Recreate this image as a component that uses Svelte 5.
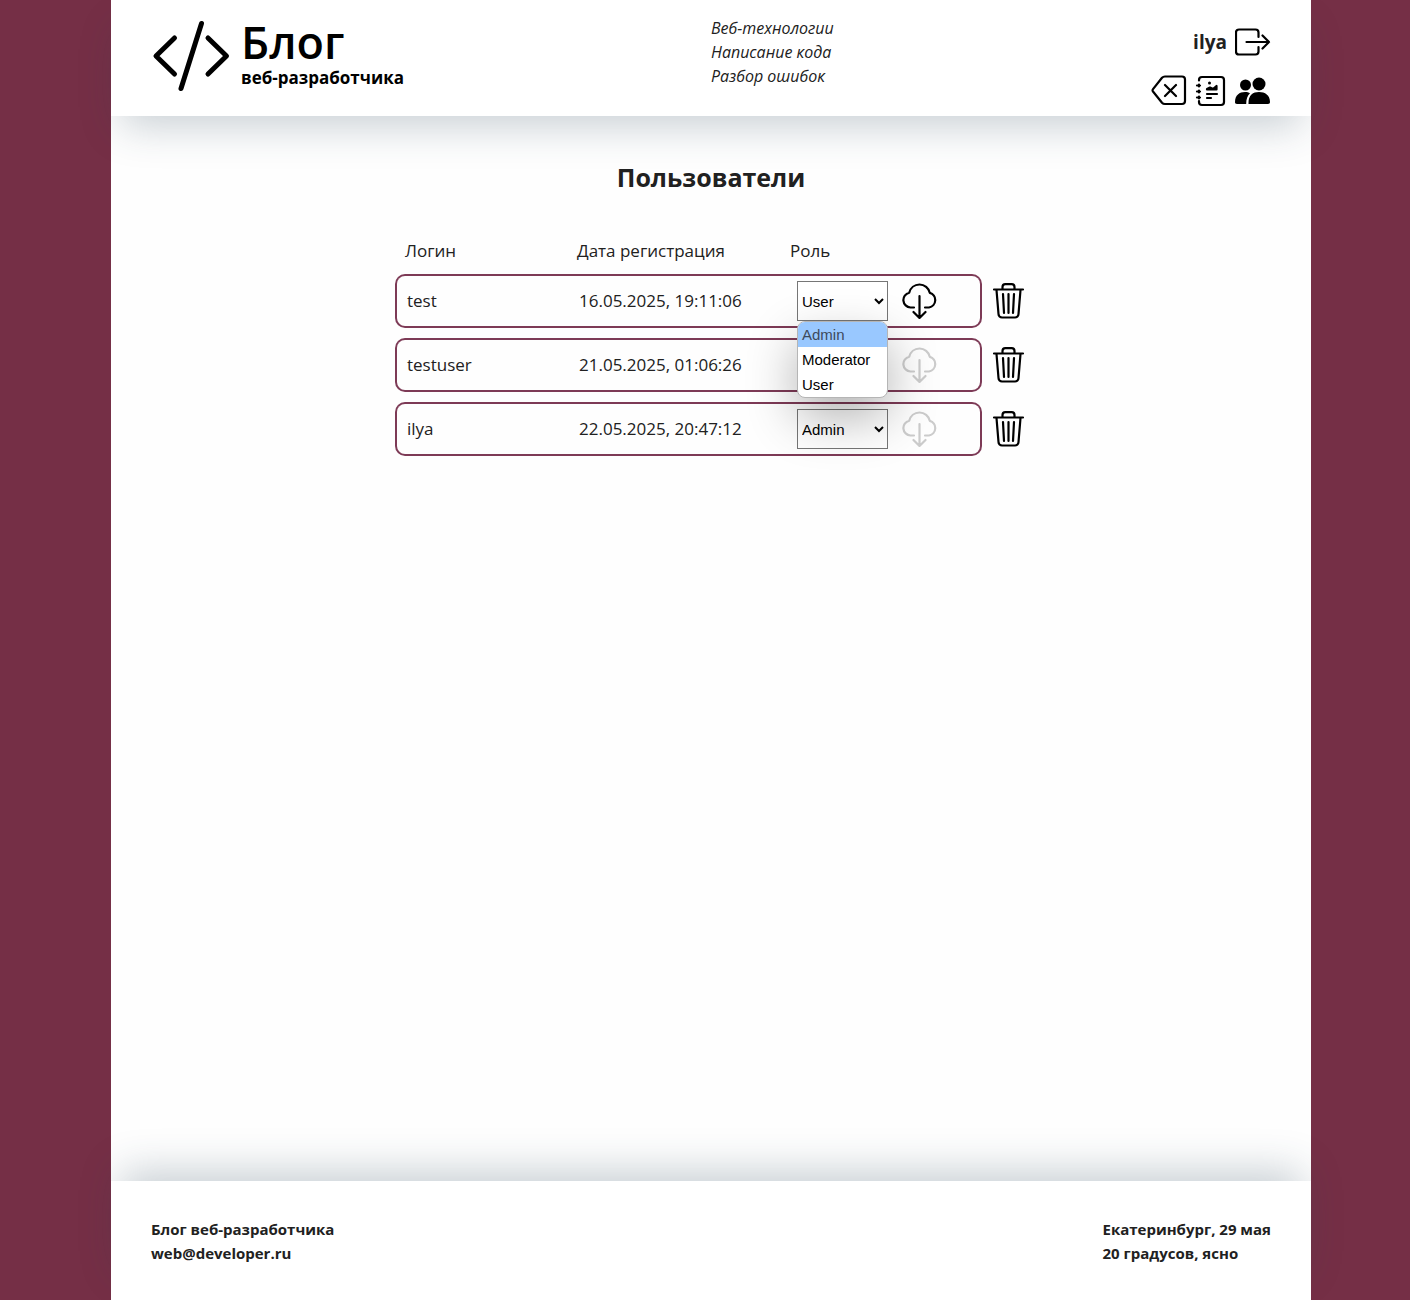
<script>
  const topics = ['Веб-технологии', 'Написание кода', 'Разбор ошибок'];
  const roles = ['Admin', 'Moderator', 'User'];

  let users = $state([
    { login: 'test', date: '16.05.2025, 19:11:06', role: 'User', changed: true, open: true },
    { login: 'testuser', date: '21.05.2025, 01:06:26', role: 'User', changed: false, open: false },
    { login: 'ilya', date: '22.05.2025, 20:47:12', role: 'Admin', changed: false, open: false }
  ]);

  function pick(user, role) {
    user.role = role;
    user.open = false;
    user.changed = true;
  }
</script>

<div class="page">
  <header>
    <a class="brand" href="#home">
      <svg class="code" viewBox="0 0 80 80" aria-hidden="true">
        <path d="M23.500 22 5 40 23.500 58M57 22 75.500 40 57 58M50.500 7.500 30 72.500" />
      </svg>
      <span class="brand-text">
        <span class="brand-title">Блог</span>
        <span class="brand-sub">веб-разработчика</span>
      </span>
    </a>
    <div class="side">
      <ul class="topics">
        {#each topics as topic}
          <li>{topic}</li>
        {/each}
      </ul>
      <div class="account">
        <div class="who">
          <span class="name">ilya</span>
          <button aria-label="Выйти">
            <svg class="icon line" viewBox="0 0 36 36">
              <path d="M23.500 13V8.500a3 3 0 0 0-3-3H4a3 3 0 0 0-3 3v19a3 3 0 0 0 3 3h16.500a3 3 0 0 0 3-3V23M11.500 18H34M27.500 11.500l6.500 6.500-6.500 6.500" />
            </svg>
          </button>
        </div>
        <nav>
          <a href="#back" aria-label="Назад">
            <svg class="icon line" viewBox="0 0 36 36">
              <path d="M14 4.500h17a3 3 0 0 1 3 3v21.500a3 3 0 0 1-3 3H14a4 4 0 0 1-3-1.300L2 19.500a2 2 0 0 1 0-2.400L11 5.800a4 4 0 0 1 3-1.300ZM14 13l11 11M25 13l-11 11" />
            </svg>
          </a>
          <a href="#post" aria-label="Новая статья">
            <svg class="icon line" viewBox="0 0 36 36">
              <path d="M6 8.500V8a3 3 0 0 1 3-3h19a3 3 0 0 1 3 3v22a3 3 0 0 1-3 3H9a3 3 0 0 1-3-3v-1M6 12.500v2M6 18.500v2M6 24.500v2M4 13.500h3M4 19.500h3M4 25.500h3M14 22h10M14 26h4" />
              <path class="solid" d="M14 17.500V17l3-1.500 3 1.500 3.500-3v3.500Z" />
              <circle class="solid dot" cx="16.500" cy="11" r="1.500" />
            </svg>
          </a>
          <a href="#users" aria-label="Пользователи">
            <svg class="icon fill" viewBox="0 0 36 36">
              <circle cx="10.500" cy="13" r="5.500" />
              <circle cx="24" cy="12" r="6.500" />
              <path d="M13.500 32v-1c0-8 4.500-11 10.500-11s11 3 11 10c0 1.300-.7 2-2 2ZM0 30.300C0 23 4.500 20 10 20c2 0 3.700.4 5 1.200-2.600 2.300-3.800 5.800-3.800 10.800H2c-1.300 0-2-.5-2-1.700Z" />
            </svg>
          </a>
        </nav>
      </div>
    </div>
  </header>

  <main>
    <h1>Пользователи</h1>
    <table>
      <colgroup>
        <col class="c-login" /><col class="c-date" /><col class="c-role" /><col class="c-del" />
      </colgroup>
      <thead>
        <tr>
          <th scope="col">Логин</th>
          <th scope="col">Дата регистрация</th>
          <th scope="col">Роль</th>
          <td></td>
        </tr>
      </thead>
      <tbody>
        {#each users as user}
          <tr>
            <td class="login">{user.login}</td>
            <td class="date">{user.date}</td>
            <td class="role">
              <div class="role-box">
                <div class="picker">
                  <select aria-label="Роль {user.login}" bind:value={user.role} onchange={() => (user.changed = true)}>
                    {#each roles as role}
                      <option>{role}</option>
                    {/each}
                  </select>
                  {#if user.open}
                    <div class="menu" role="listbox" aria-label="Роли">
                      {#each roles as role, i}
                        <button role="option" aria-selected={i === 0} class:active={i === 0} onclick={() => pick(user, role)}>{role}</button>
                      {/each}
                    </div>
                  {/if}
                </div>
                <button class="save" aria-label="Сохранить роль" disabled={!user.changed}>
                  <svg class="icon line" viewBox="0 0 36 36">
                    <path d="M13 24.500H9.500a7.500 7.500 0 0 1-1.300-14.800C9.500 4.800 13.500 1.500 18.500 1.500s9.300 3.500 10.300 8.400A7.500 7.500 0 0 1 28 24.500h-4M18.500 13v21.500M12.500 29l6 6 6-6" />
                  </svg>
                </button>
              </div>
            </td>
            <td class="del">
              <button aria-label="Удалить {user.login}">
                <svg class="icon line" viewBox="0 0 36 36">
                  <path d="M4 6.500h29M12.500 6V4a2.800 2.800 0 0 1 2.800-2.800h6.400A2.800 2.800 0 0 1 24.500 4v2M6.500 7l2 24A3.500 3.500 0 0 0 12 34.500h13a3.500 3.500 0 0 0 3.500-3.500L30.500 7M13 11l1 19M18.500 11v19M24 11l-1 19" />
                </svg>
              </button>
            </td>
          </tr>
        {/each}
      </tbody>
    </table>
  </main>

  <footer>
    <div>
      <div>Блог веб-разработчика</div>
      <div>web@developer.ru</div>
    </div>
    <div>
      <div>Екатеринбург, 29 мая</div>
      <div>20 градусов, ясно</div>
    </div>
  </footer>
</div>

<style>
  :global(body) {
    margin: 0;
    padding-left: 12px;
    background: #752f46;
  }
  .page {
    display: flex;
    flex-direction: column;
    box-sizing: border-box;
    max-width: 1200px;
    min-height: 100vh;
    margin: 0 auto;
    background: #fefefe;
    color: #212121;
    font-family: 'Segoe UI', 'Open Sans', 'Noto Sans', sans-serif;
    font-size: 17px;
    line-height: 24px;
  }
  header {
    display: grid;
    grid-template-columns: 1fr 1fr;
    padding: 16px 40px 8px;
    background: #fff;
    box-shadow: 0 20px 40px -10px rgba(38, 67, 87, 0.25);
  }
  .brand {
    display: flex;
    align-items: flex-start;
    align-self: start;
    gap: 10px;
    color: #000;
    text-decoration: none;
  }
  .code {
    width: 80px;
    height: 80px;
    fill: none;
    stroke: #000;
    stroke-width: 5;
    stroke-linecap: round;
    stroke-linejoin: round;
  }
  .brand-text {
    display: flex;
    flex-direction: column;
  }
  .brand-title {
    font-size: 45px;
    line-height: 52px;
    font-weight: 600;
  }
  .brand-sub {
    font-size: 17px;
    line-height: 20px;
    font-weight: 700;
  }
  .side {
    display: flex;
    justify-content: space-between;
  }
  .topics {
    margin: 0;
    padding: 0;
    list-style: none;
    font-size: 16px;
    font-style: italic;
  }
  .account {
    display: flex;
    flex-direction: column;
    align-items: flex-end;
    gap: 12px;
    padding-top: 8px;
  }
  .who {
    display: flex;
    align-items: center;
    gap: 8px;
  }
  .name {
    font-size: 19px;
    font-weight: 700;
  }
  nav {
    display: flex;
    gap: 6px;
  }
  button {
    padding: 0;
    border: 0;
    background: none;
    color: #000;
    cursor: pointer;
  }
  nav a {
    color: #000;
  }
  .icon {
    display: block;
    width: 36px;
    height: 36px;
  }
  .line {
    fill: none;
    stroke: currentColor;
    stroke-width: 2.2;
    stroke-linecap: round;
    stroke-linejoin: round;
  }
  .fill,
  .solid {
    fill: currentColor;
  }
  .dot {
    stroke: none;
  }
  main {
    flex: 1;
    padding: 39px 20px;
  }
  h1 {
    margin: 0 0 30px;
    font-size: 25px;
    line-height: 44px;
    font-weight: 700;
    text-align: center;
  }
  table {
    width: 632px;
    max-width: 100%;
    margin: 0 auto;
    table-layout: fixed;
    border-collapse: separate;
    border-spacing: 0 10px;
  }
  .c-login {
    width: 172px;
  }
  .c-date {
    width: 213px;
  }
  .c-del {
    width: 45px;
  }
  thead td,
  th {
    padding: 0 0 1px 10px;
    font-weight: 400;
    text-align: left;
  }
  tbody td {
    height: 50px;
    padding: 0 0 0 12px;
    border: solid #7d3a56;
    border-width: 2px 0;
  }
  tbody .login {
    padding-left: 10px;
    border-left-width: 2px;
    border-radius: 10px 0 0 10px;
  }
  tbody .role {
    padding-left: 17px;
    border-right-width: 2px;
    border-radius: 0 10px 10px 0;
  }
  tbody .del {
    padding: 0 0 0 8px;
    border-color: transparent;
  }
  .del button {
    display: block;
  }
  .role-box {
    display: flex;
    align-items: center;
    gap: 13px;
  }
  .picker {
    position: relative;
  }
  select {
    display: block;
    width: 91px;
    height: 40px;
    border: 1px solid #767676;
    border-radius: 0;
    background: #fff;
    color: #000;
    font: 15px 'Liberation Sans', Arial, sans-serif;
  }
  .menu {
    position: absolute;
    z-index: 1;
    top: 100%;
    left: 0;
    box-sizing: border-box;
    width: 91px;
    overflow: hidden;
    border: 1px solid #b5b5b5;
    border-radius: 8px;
    background: #fff;
    box-shadow: 0 20px 50px rgba(0, 0, 0, 0.3);
  }
  .menu button {
    display: block;
    width: 100%;
    padding: 0 4px;
    font: 15px/25px 'Liberation Sans', Arial, sans-serif;
    text-align: left;
  }
  .menu .active {
    background: #99c8ff;
    color: #3d4a5c;
  }
  .save:disabled {
    color: #ccc;
  }
  footer {
    display: flex;
    justify-content: space-between;
    padding: 36px 40px 35px;
    background: #fff;
    box-shadow: 0 -20px 40px -10px rgba(38, 67, 87, 0.25);
    font-size: 15px;
    font-weight: 700;
  }
</style>
